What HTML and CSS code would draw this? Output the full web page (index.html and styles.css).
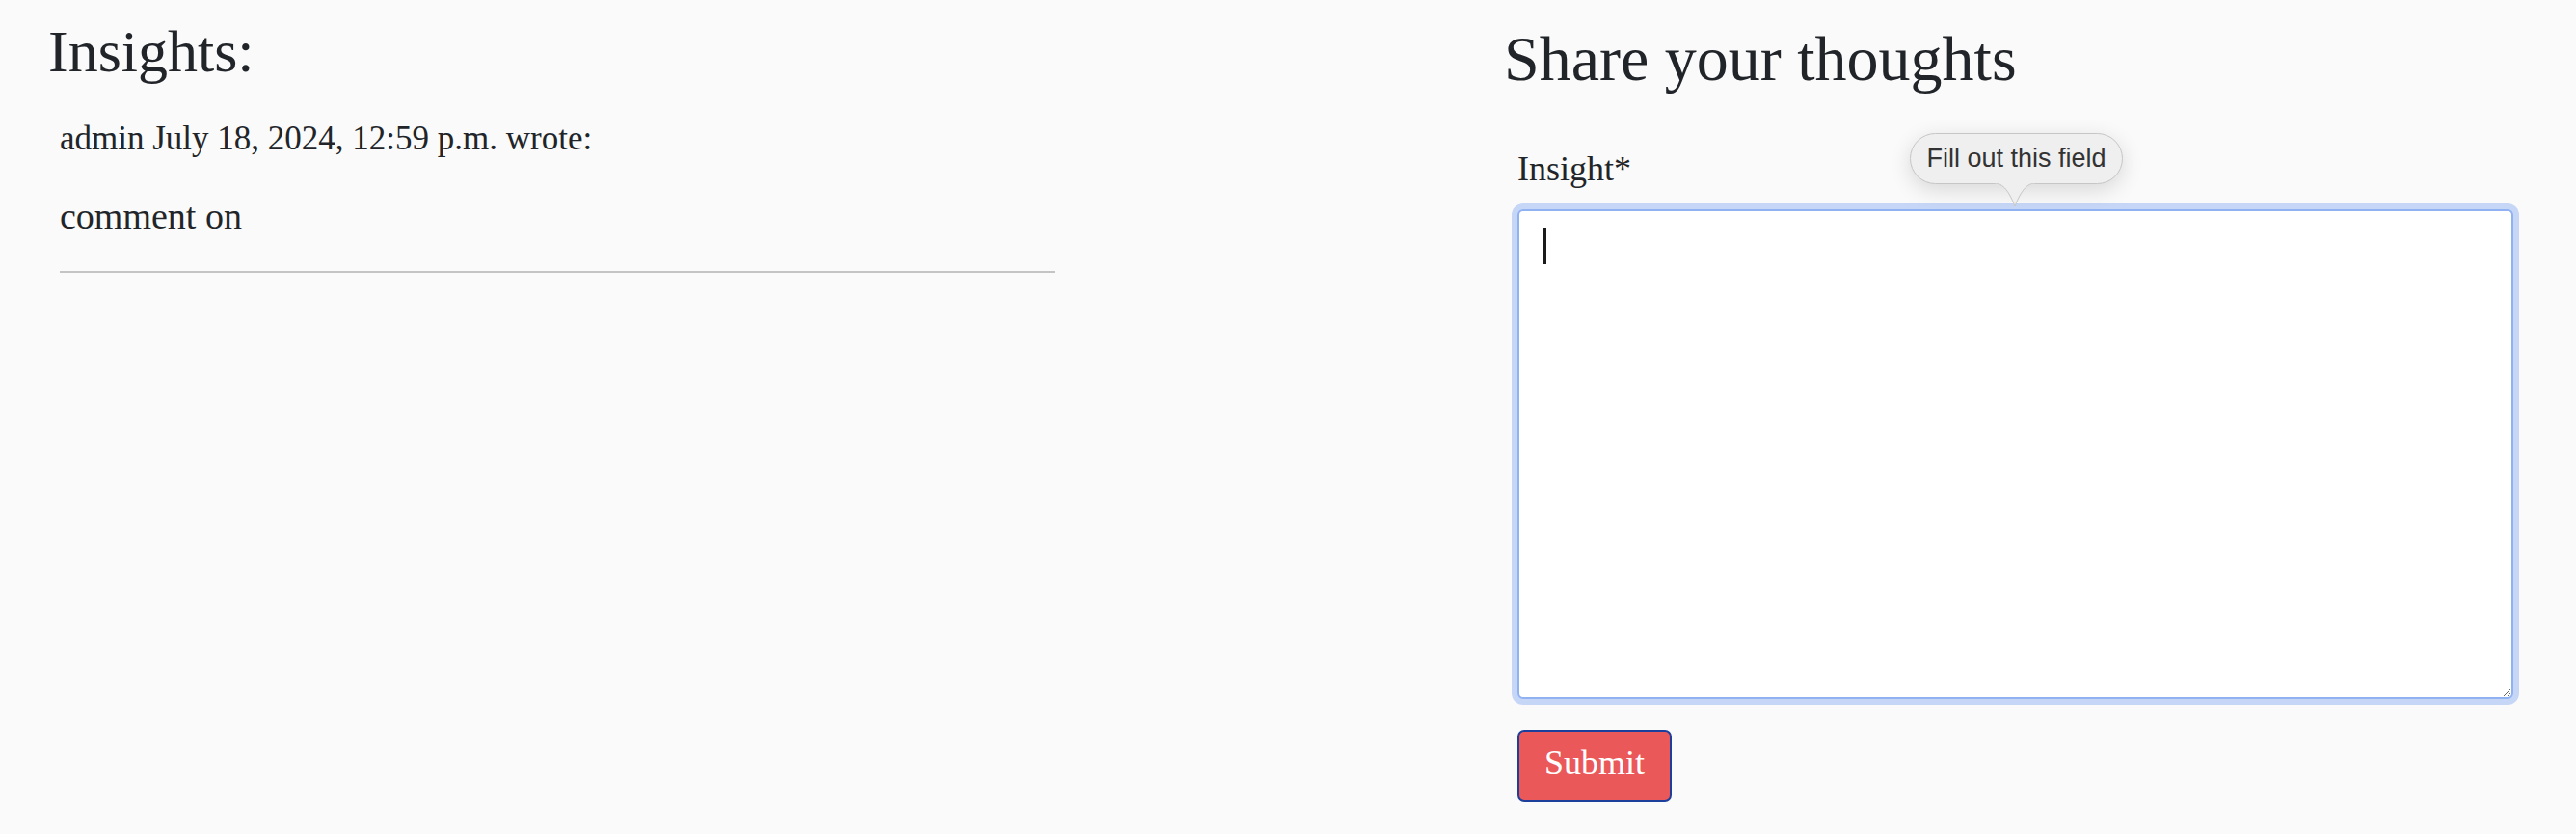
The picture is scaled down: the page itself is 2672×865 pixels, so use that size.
FILE: index.html
```html
<!DOCTYPE html>
<html lang="en">
<head>
<meta charset="utf-8">
<title>Insights</title>
<link rel="stylesheet" href="styles.css">
</head>
<body>
<main class="page">
  <section class="col col-left">
    <h2 class="title-insights">Insights:</h2>
    <div class="comment">
      <p class="comment-meta">admin July 18, 2024, 12:59 p.m. wrote:</p>
      <p class="comment-body">comment on</p>
      <hr class="comment-rule">
    </div>
  </section>
  <section class="col col-right">
    <h1 class="title-share">Share your thoughts</h1>
    <form class="form">
      <div class="field">
        <label class="field-label" for="insight">Insight*</label>
        <div class="textarea-wrap">
          <textarea id="insight" class="field-input is-focused" required></textarea>
          <span class="caret"></span>
        </div>
        <div class="bubble">
          <span class="bubble-text">Fill out this field</span>
          <svg class="bubble-arrow" width="42" height="26" viewBox="0 0 42 26">
            <path d="M0 1 C11 1 17 15 21 25 C25 15 31 1 42 1" fill="#efefef" stroke="#c6c6c6" stroke-width="1"/>
            <rect x="0" y="0" width="42" height="1.2" fill="#efefef"/>
          </svg>
        </div>
      </div>
      <button type="button" class="btn-submit">Submit</button>
    </form>
  </section>
</main>
</body>
</html>
```
FILE: styles.css
```css
html, body {
  margin: 0;
  padding: 0;
  background: #fafafa;
}
body {
  font-family: "Liberation Serif", "Times New Roman", serif;
  color: #212529;
}
.page {
  display: grid;
  grid-template-columns: 1058px 1058px;
  column-gap: 452px;
  padding-left: 50px;
}
.col {
  display: flex;
  flex-direction: column;
}
.title-insights {
  margin: 16px 0 0 0;
  font-size: 62px;
  font-weight: 400;
  line-height: 1.2;
}
.comment {
  padding: 0 14px 0 12px;
  margin-top: 28px;
}
.comment-meta,
.comment-body {
  margin: 0;
  font-size: 35px;
  line-height: 52px;
}
.comment-body {
  margin-top: 28px;
  font-size: 38px;
}
.comment-rule {
  margin: 31px 0 0 0;
  border: 0;
  border-top: 2px solid #c4c4c4;
  height: 0;
}
.title-share {
  margin: 21px 0 0 0;
  font-size: 66px;
  font-weight: 400;
  line-height: 1.2;
}
.form {
  padding-left: 14px;
  margin-top: 48px;
}
.field {
  position: relative;
  display: flex;
  flex-direction: column;
}
.field-label {
  font-size: 36px;
  line-height: 1.5;
}
.textarea-wrap {
  position: relative;
  margin-top: 15px;
  width: 1033px;
}
.field-input {
  display: block;
  box-sizing: border-box;
  width: 1033px;
  height: 508px;
  margin: 0;
  padding: 12px 24px;
  background: #fff;
  border: 2px solid #90b2f3;
  border-radius: 6px;
  resize: both;
  font-family: "Liberation Serif", serif;
  font-size: 36px;
  outline: none;
}
.field-input.is-focused {
  box-shadow: 0 0 0 6px #c6d6f7;
}
.caret {
  position: absolute;
  left: 27px;
  top: 19px;
  width: 3px;
  height: 38px;
  background: #1b1b1b;
}
.bubble {
  position: absolute;
  left: 407px;
  top: -10px;
  box-sizing: border-box;
  width: 221px;
  height: 53px;
  display: flex;
  align-items: center;
  justify-content: center;
  background: #efefef;
  border: 1px solid #c6c6c6;
  border-radius: 27px;
  box-shadow: 0 6px 22px rgba(0, 0, 0, 0.14);
}
.bubble-text {
  font-family: "Liberation Sans", Arial, sans-serif;
  font-size: 27px;
  color: #333;
  line-height: 1;
}
.bubble-arrow {
  position: absolute;
  left: 87px;
  top: 50px;
  overflow: visible;
}
.btn-submit {
  align-self: flex-start;
  margin-top: 32px;
  box-sizing: border-box;
  height: 75px;
  padding: 4px 26px 11px;
  background: #ea585a;
  color: #fff;
  border: 2px solid #1d3f9c;
  border-radius: 7px;
  font-family: "Liberation Serif", serif;
  font-size: 36px;
  line-height: 1.5;
}
```
